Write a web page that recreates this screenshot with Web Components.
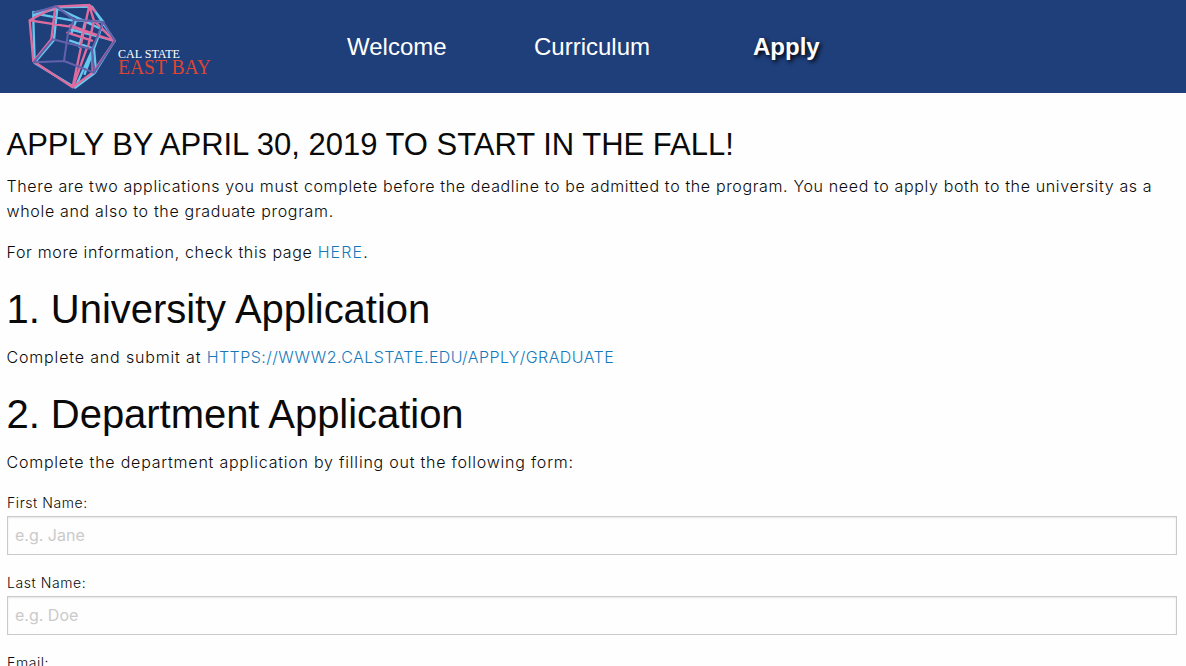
<!DOCTYPE html>
<html lang="en">
<head>
<meta charset="utf-8">
<title>Apply</title>
<style>
html,body{margin:0;background:#fefefe}
body{font-family:"Liberation Sans",Arial,sans-serif;color:#0a0a0a}
</style>
</head>
<body>
<apply-page></apply-page>
<script>
const define=(name,html)=>customElements.define(name,class extends HTMLElement{
  constructor(){super();this.attachShadow({mode:'open'}).innerHTML=html;}
});

define('cube-logo',`<style>
:host{display:block;width:220px;height:93px}
svg{display:block}
.c{stroke:#66c6ec}.p{stroke:#e06c9f}.v{stroke:#6460aa}
text{font-family:"Liberation Serif",serif}
</style>
<svg width="220" height="93" viewBox="0 0 220 93">
<g transform="translate(20 0) scale(.33333)" fill="none" stroke-width="7" stroke-linejoin="round" stroke-linecap="round">
<path class="c" d="M40 38L112 22L216 20L284 122L224 219L166 263L44 189M40 36L40 60L44 188M40 46L108 26M42 40L160 62M112 24L102 118M114 26L250 90M160 60L248 66M216 22L250 66L232 118L166 262M232 118L194 222M284 122L150 88M168 62L154 100M196 62L178 140M102 120L46 186M222 146L228 214M150 122L220 146"/>
<path class="p" d="M29 61L106 20L208 15L226 34M29 61L40 184L158 262L220 216L280 128M29 61L150 80L250 112M106 20L94 118L42 182M208 15L182 138M222 62L204 140M208 18L222 62L282 122M150 76L284 124M142 98L216 122M216 146L218 214M182 146L158 260M200 146L160 258"/>
<path class="v" stroke-width="6" d="M42 186L98 118L216 148L222 218M42 187L132 183L222 218M132 183L144 100L162 59L250 66L216 148M42 38L108 19L162 59M250 66L284 122L222 218"/>
</g>
<text x="118" y="58" font-size="12.5" fill="#fff" textLength="62" lengthAdjust="spacingAndGlyphs">CAL STATE</text>
<text x="118" y="73.5" font-size="21.5" fill="#dc4433" textLength="93" lengthAdjust="spacingAndGlyphs">EAST BAY</text>
</svg>`);

define('nav-item',`<style>
:host{display:block;font-size:24px;line-height:28px;color:#fff}
:host([active]){font-weight:700;text-shadow:2px 2px 4px #000}
</style><slot></slot>`);

define('site-header',`<style>
:host{display:flex;height:93px;background:#1f3f7b}
nav{display:grid;grid-template-columns:187px 219px auto;padding:33px 0 0 127px;align-content:start}
</style><cube-logo></cube-logo><nav><slot></slot></nav>`);

define('page-heading',`<style>
:host{display:block;font-size:40px;line-height:56px;margin-bottom:8px;letter-spacing:-.04px}
:host([minor]){font-size:31px;line-height:43.4px;letter-spacing:-.01px}
</style><slot></slot>`);

define('body-text',`<style>
:host{display:block;font:300 16px/25px Inter,sans-serif;margin-bottom:16px;white-space:nowrap}
</style><slot></slot>`);

define('form-field',`<style>
:host{display:block;margin-bottom:16px;font-family:Inter,sans-serif;font-weight:300}
label{display:block;font-size:14px;line-height:23px;padding-bottom:2px;letter-spacing:.57px}
div{box-sizing:border-box;height:39px;border:1px solid #cacaca;box-shadow:inset 0 1px 2px rgba(10,10,10,.1);padding:0 7px;font-size:16px;line-height:37px;color:#cacaca;font-weight:400;background:#fefefe}
</style><label><slot name="label"></slot></label><div><slot></slot></div>`);

define('apply-page',`<style>
:host{display:block;height:666px;overflow:hidden}
main{padding:29.6px 9px 0 6.5px}
form-field{margin-left:.5px}
a{text-decoration:none;color:#1779ba}
.intro{letter-spacing:.637px}
.whole{letter-spacing:.68px}
.more{letter-spacing:.655px}
.here{letter-spacing:1.1px}
.submit{letter-spacing:.84px}
.url{letter-spacing:.44px}
.form{letter-spacing:.775px}
</style>
<site-header><nav-item>Welcome</nav-item><nav-item>Curriculum</nav-item><nav-item active>Apply</nav-item></site-header>
<main>
<page-heading minor>APPLY BY APRIL 30, 2019 TO START IN THE FALL!</page-heading>
<body-text><span class="intro">There are two applications you must complete before the deadline to be admitted to the program. You need to apply both to the university as a</span><br><span class="whole">whole and also to the graduate program.</span></body-text>
<body-text><span class="more">For more information, check this page </span><a class="here">HERE</a>.</body-text>
<page-heading>1. University Application</page-heading>
<body-text><span class="submit">Complete and submit at </span><a class="url">HTTPS://WWW2.CALSTATE.EDU/APPLY/GRADUATE</a></body-text>
<page-heading>2. Department Application</page-heading>
<body-text><span class="form">Complete the department application by filling out the following form:</span></body-text>
<form-field><span slot="label">First Name:</span>e.g. Jane</form-field>
<form-field><span slot="label">Last Name:</span>e.g. Doe</form-field>
<form-field><span slot="label">Email:</span></form-field>
</main>`);
</script>
</body>
</html>
